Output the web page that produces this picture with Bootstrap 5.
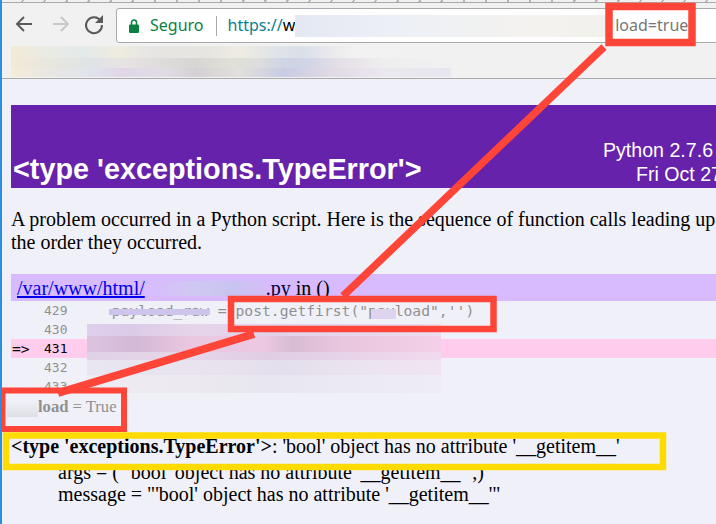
<!DOCTYPE html>
<html><head><meta charset="utf-8">
<link href="https://cdn.jsdelivr.net/npm/bootstrap@5.3.0/dist/css/bootstrap.min.css" rel="stylesheet">
<style>
html,body{height:524px;overflow:hidden}
body{background:#f0f0f8;font-family:"Liberation Serif",serif;color:#000;font-size:20px;line-height:23px;position:relative;border-left:2px solid #2a8fe0}
.tabedge{height:3px;background:repeating-linear-gradient(115deg,#f1f1f1 0 18px,#b5b5b5 18px 20px);border-bottom:1px solid #aaa}
.chrome-bar{height:39px;background:#f1f1f1;padding-left:10px;gap:11px}
.navglyph{width:24px;height:24px;display:block;margin-top:3px}
.nav-fwd{margin-left:2px}
.nav-rel{margin-left:-2px}
.omni{position:absolute;left:114px;top:8px;width:610px;height:35px;background:#fff;border:1px solid #a9a9a9;border-radius:3px;font-family:"Noto Sans","Open Sans",sans-serif;font-size:16px;line-height:33px;white-space:nowrap}
.lock-ic{margin-left:12px;flex:none}
.seg-green{color:#0b8043;margin-left:11px}
.sep-v{width:1px;height:20px;background:#aaa;margin:0 11px 0 12px}
.url-a{color:#0b7f8f}
.url-mask{flex:none;width:320px;height:22px;background:linear-gradient(90deg,#e4e8f2,#edf0f6 35%,#f4f2ee 75%,#f1f1ec 98%,#fff)}
.url-b{color:#777}
.bookmarks{height:37px;background:#f1f1f1;border-bottom:1px solid #aaa;padding:4px 0 0 9px}
.blurbar{height:31px;width:440px;background:
 linear-gradient(90deg,#f3ead6,#e9ebe4 8%,#e4e9ea 17%,#efece0 24%,#e6e5e3 32%,#e6e5e0 45%,#eeece2 52%,#e0e4e8 60%,#d9e0e8 66%,#e8e8ec 72%,#f2f2f2 78%,#f1f1f1) 0 0/100% 12px no-repeat,
 linear-gradient(90deg,#f3ead6,#e6e6e0 10%,#e0e3e6 19%,#e6e3e2 25%,#d8d6d4 42%,#e0e0d8 50%,#dddddd 56%,#cdd4e4 62%,#d2d5e6 68%,#e6e0e8 75%,#eeeeee 85%,#f1f1f1) 0 12px/100% 10px no-repeat,
 linear-gradient(90deg,#f3ecd8,#e8e6e4 10%,#dfe4ec 18%,#e0d6e8 25%,#e0dce4 35%,#d4d0d4 42%,#e2e0dc 52%,#c8cce4 62%,#e0d8e4 72%,#ebe8f0 85%,#e8e6ee) 0 22px/100% 9px no-repeat}
.banner{margin:26px 0 0 9px;height:83px;background:#6622aa;color:#fff;font-family:"Liberation Sans",sans-serif;overflow:hidden}
.banner-title{font-size:28.8px;font-weight:700;line-height:33px;padding:0 0 2px 2px;white-space:nowrap}
.banner-side{font-size:19.6px;line-height:24px;padding:0 0 2px;white-space:nowrap;width:113px;flex:none}
.side-two{display:block;padding-left:33px}
.intro{margin:20px 0 0 9px;white-space:nowrap}
.frame-head{margin:20px 0 0 9px;height:27px;background:#d8bbff;padding:3px 0 0 6px;white-space:nowrap}
.frame-head a{color:#0000ee}
.path-mask{display:inline-block;width:121px;height:15px;vertical-align:-1px;background:linear-gradient(90deg,#d8bbff,#d0c8f2 40%,#c8c4f0 70%,#d4bef8)}
.frame-head a.py-link{color:#000040}
.code-row{height:19px;margin-left:9px;display:flex;font-family:"DejaVu Sans Mono",monospace;font-size:14.7px;line-height:19px;color:#909090;white-space:pre}
.code-row.hot{background:#ffccee;color:#000}
.arrow-cell{width:33px;flex:none;padding-left:1px}
.lnum{width:50px;flex:none;font-size:13px}
.var-line{margin:1px 0 0 36px;font-size:16.600px;line-height:20px;color:#909090;white-space:nowrap}
.err-line{margin:18px 0 3px 9px;line-height:23px;white-space:nowrap}
.attr-line{margin-left:56px;line-height:22px;white-space:nowrap}
.ann{position:absolute;left:-2px;top:0;width:716px;height:524px;pointer-events:none}
.mosaic{position:absolute;left:85px;top:324px;width:354px;height:69px;background:
 linear-gradient(90deg,#e0cfec,#dccbe8 12%,#e6d4ea 30%,#e2d2ea 55%,#e6d8ee 80%,#ecdcf0) 0 0/100% 12px no-repeat,
 linear-gradient(90deg,#dcc4e0,#d4b8d6 14%,#eac8e0 30%,#ecc8e2 50%,#d8bcd4 58%,#e8c6de 72%,#f4d0e8) 0 12px/100% 16px no-repeat,
 linear-gradient(90deg,#e0d2e6,#e6d6ea 30%,#e0cde4 50%,#e6d2e8 70%,#f2daee) 0 28px/100% 8px no-repeat,
 linear-gradient(90deg,#e8e6f0,#e8e2ee 40%,#e4dfec 55%,#ece4f0 80%,#f0e4f2) 0 36px/100% 15px no-repeat,
 linear-gradient(90deg,#eeecf2,#ece9f0 30%,#e8e6ee 50%,#ecebf3 80%,#eeecf5) 0 51px/100% 18px no-repeat}
.py-mask{position:absolute;left:107px;top:309px;width:101px;height:6px;background:#cfc4ec}
.q-mask{position:absolute;left:369px;top:309px;width:25px;height:10px;background:#ded4f0}
.load-mask{position:absolute;left:5px;top:402px;width:31px;height:15px;background:linear-gradient(180deg,#efeff6,#dedee6)}
</style></head>
<body>
<div class="tabedge"></div>
<div class="chrome-bar d-flex align-items-center">
  <svg class="navglyph" viewBox="0 0 24 24"><path d="M20 12H5M12 5l-7 7 7 7" fill="none" stroke="#5a5a5a" stroke-width="2"/></svg>
  <svg class="navglyph nav-fwd" viewBox="0 0 24 24"><path d="M4 12h15M12 5l7 7-7 7" fill="none" stroke="#c9c9c9" stroke-width="2"/></svg>
  <svg class="navglyph nav-rel" viewBox="0 0 24 24"><path d="M18.800 9A8 8 0 1 0 20 13" fill="none" stroke="#5a5a5a" stroke-width="2"/><path d="M21 3v8h-8z" fill="#5a5a5a"/></svg>
</div>
<div class="bookmarks"><div class="blurbar"></div></div>
<div class="omni d-flex align-items-center">
  <svg class="lock-ic" width="10" height="14" viewBox="0 0 10 14"><path d="M2.500 6V3.500a2.500 2.500 0 0 1 5 0V6" fill="none" stroke="#0b8043" stroke-width="1.500"/><rect y="5.500" width="10" height="8.500" rx="1" fill="#0b8043"/></svg>
  <span class="seg-green">Seguro</span>
  <span class="sep-v"></span>
  <span class="url-a">https://</span><span>w</span><span class="url-mask"></span><span class="url-b">load=true</span>
</div>
<div class="banner d-flex justify-content-between align-items-end">
  <div class="banner-title">&lt;type 'exceptions.TypeError'&gt;</div>
  <div class="banner-side">Python 2.7.6<span class="side-two">Fri Oct 27</span></div>
</div>
<div class="intro">A problem occurred in a Python script. Here is the sequence of function calls leading up<br>the order they occurred.</div>
<div class="frame-head"><a href="#">/var/www/html/</a><span class="path-mask"></span><a href="#" class="py-link">.py</a> in ()</div>
<div class="code-row"><span class="arrow-cell"></span><span class="lnum">429</span><span>  payload_raw = post.getfirst("payload",'')</span></div>
<div class="code-row"><span class="arrow-cell"></span><span class="lnum">430</span></div>
<div class="code-row hot"><span class="arrow-cell">=&gt;</span><span class="lnum">431</span></div>
<div class="code-row"><span class="arrow-cell"></span><span class="lnum">432</span></div>
<div class="code-row"><span class="arrow-cell"></span><span class="lnum">433</span></div>
<div class="var-line"><b>load</b> = True</div>
<div class="err-line"><b>&lt;type 'exceptions.TypeError'&gt;</b>: 'bool' object has no attribute '__getitem__'</div>
<div class="attr-line">args = ("'bool' object has no attribute '__getitem__'",)</div>
<div class="attr-line">message = "'bool' object has no attribute '__getitem__'"</div>

<div class="py-mask"></div><div class="q-mask"></div><div class="load-mask"></div><div class="mosaic"></div>
<svg class="ann" viewBox="0 0 716 524">
  <g fill="none" stroke="#ff4438">
    <rect x="609" y="6.500" width="83" height="36" stroke-width="7.500"/>
    <rect x="231" y="299" width="262.500" height="30" stroke-width="6.500"/>
    <rect x="2.500" y="390.500" width="121.500" height="38.500" stroke-width="6"/>
    <path d="M604 47 L343 296" stroke-width="7.500"/>
    <path d="M254 334 L58 393" stroke-width="8"/>
  </g>
  <rect x="6" y="435.500" width="657" height="31.500" fill="none" stroke="#ffdb00" stroke-width="6.500"/>
</svg>
</body></html>
